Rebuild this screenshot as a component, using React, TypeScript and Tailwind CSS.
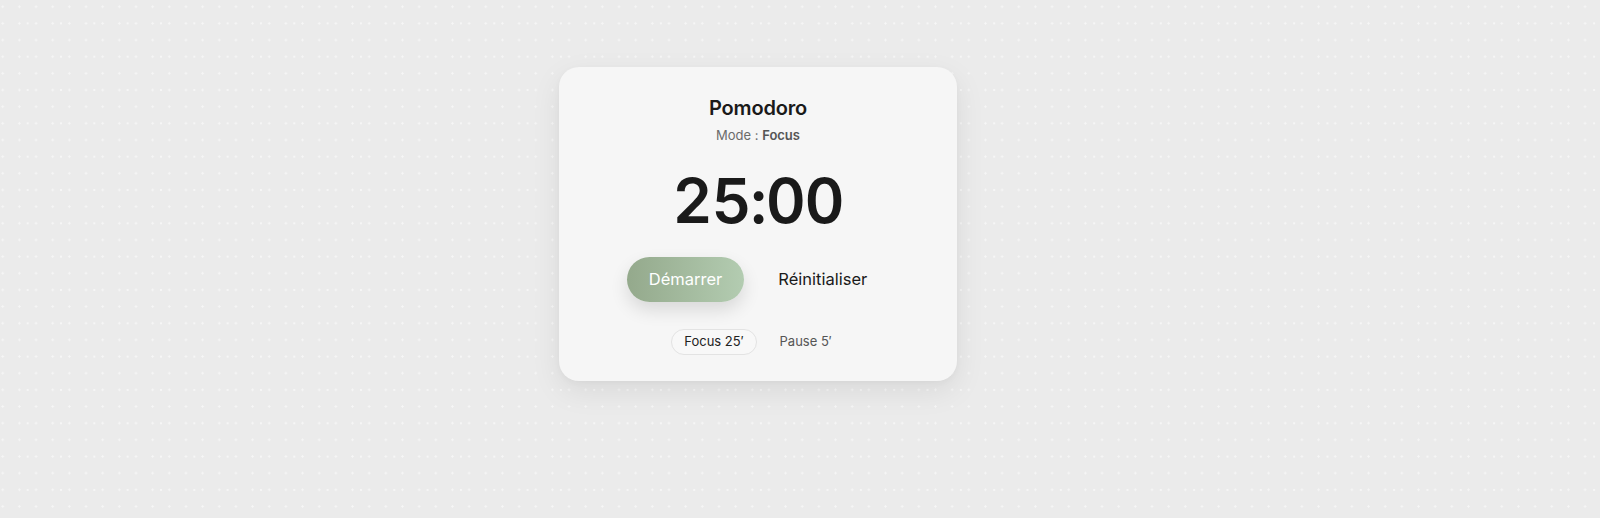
export default function App() {
  return (
    <div
      className="min-h-[518px] w-full bg-[#ebebeb] [background-image:radial-gradient(circle,rgba(255,255,255,0.55)_0.9px,transparent_1.4px),radial-gradient(circle,rgba(255,255,255,0.55)_0.9px,transparent_1.4px)] [background-size:16.667px_16.667px,33.333px_33.333px] [background-position:-5.6px_-1.6px,11px_6.7px] flex justify-center pr-[84px] pt-[67px]"
      style={{ fontFamily: 'Inter, "Noto Sans", sans-serif' }}
    >
      <div className="w-[398px] h-[314px] bg-[#f6f6f6] rounded-[20px] shadow-[0_10px_30px_rgba(0,0,0,0.08),0_2px_6px_rgba(0,0,0,0.03)] pt-[27px] flex flex-col items-center">
        <h1 className="text-[20px] leading-7 font-semibold text-[#1a1a1a] tracking-[-0.01em]">Pomodoro</h1>
        <p className="mt-[3px] text-[13px] leading-5 text-[#6b6b6b]">
          Mode : <span className="font-semibold text-[#555]">Focus</span>
        </p>

        <div className="mt-[25px] text-[62px] leading-none font-semibold text-[#1a1a1a] tracking-[-0.02em] tabular-nums">
          25:00
        </div>

        <div className="mt-[25px] flex items-center gap-3">
          <button className="h-[45px] px-[22px] rounded-full bg-gradient-to-r from-[#94a98c] to-[#b3ccb1] text-white text-[16.5px] shadow-[0_8px_18px_rgba(0,0,0,0.12)]">
            Démarrer
          </button>
          <button className="h-[45px] px-[22px] rounded-full text-[16.5px] text-[#1a1a1a]">
            Réinitialiser
          </button>
        </div>

        <div className="mt-[27px] flex items-center gap-2.5">
          <button className="h-[26px] px-3 rounded-full border border-[#e3e3e3] bg-[#f8f8f8] text-[13px] text-[#222]">
            Focus 25′
          </button>
          <button className="h-[26px] px-3 rounded-full border border-transparent text-[13px] text-[#555]">
            Pause 5′
          </button>
        </div>
      </div>
    </div>
  );
}
